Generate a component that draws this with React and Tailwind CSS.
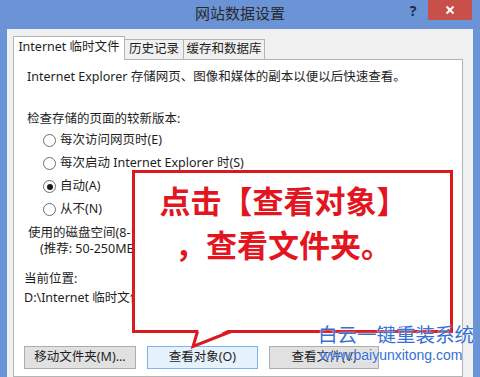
import React from "react";

const Radio = ({ checked, label }) => (
  <div className="h-[23px] flex items-center pl-[29px]">
    <span className="w-[13px] h-[13px] rounded-full border border-[#6e6e6e] bg-white flex items-center justify-center">
      {checked && <span className="w-[6px] h-[6px] rounded-full bg-[#1a1a1a]"></span>}
    </span>
    <span className="ml-[4px]">{label}</span>
  </div>
);

const App = () => {
  const radios = [
    { label: "每次访问网页时(E)", checked: false },
    { label: "每次启动 Internet Explorer 时(S)", checked: false },
    { label: "自动(A)", checked: true },
    { label: "从不(N)", checked: false },
  ];

  return (
    <div className="w-[480px] h-[377px] overflow-hidden bg-[#6b94d6] relative flex flex-col font-['Noto_Sans','Noto_Sans_CJK_SC',sans-serif] text-[12.5px] text-[#1e1e1e]">
      {/* Title bar */}
      <div className="h-[29px] shrink-0 grid grid-cols-[1fr_auto_1fr]">
        <div></div>
        <div className="flex items-center text-[15px] text-[#2a2a2a] pb-[2px]">网站数据设置</div>
        <div className="flex items-start justify-end">
          <div className="w-[16px] h-[20px] mr-[7px] flex items-center justify-center text-[14px] font-bold text-[#1c2b4f]">?</div>
          <div className="w-[44px] h-[20px] mr-[8px] bg-[#c9504a] flex items-center justify-center">
            <svg width="10" height="10" viewBox="0 0 10 10">
              <path d="M1.5 1.5 L8.5 8.5 M8.5 1.5 L1.5 8.5" stroke="white" strokeWidth="2" />
            </svg>
          </div>
        </div>
      </div>

      {/* Dialog body */}
      <div className="mx-[7px] flex-1 bg-[#f0f0f0] pl-[6px] pt-[7px] flex flex-col">
        {/* Tabs */}
        <div className="h-[24px] flex items-end shrink-0">
          <div className="relative z-10 w-[112px] h-[24px] bg-white border-l border-t border-r border-[#b4b4b4] flex items-center justify-center pb-[2px]">
            Internet 临时文件
          </div>
          <div className="w-[60px] h-[21px] -ml-px bg-[#f0f0f0] border border-[#b4b4b4] flex items-center justify-center pb-[1px]">
            历史记录
          </div>
          <div className="w-[82px] h-[21px] -ml-px bg-[#f0f0f0] border border-[#b4b4b4] flex items-center justify-center pb-[1px]">
            缓存和数据库
          </div>
        </div>

        {/* Tab panel */}
        <div className="-mt-px w-[450px] flex-1 bg-white border border-[#b4b4b4] pt-[7px]">
          <div className="h-[20px] flex items-center pl-[13px] whitespace-nowrap">
            Internet Explorer 存储网页、图像和媒体的副本以便以后快速查看。
          </div>
          <div className="h-[20px] mt-[22px] flex items-center pl-[13px]">检查存储的页面的较新版本:</div>
          {radios.map((r) => (
            <Radio key={r.label} label={r.label} checked={r.checked} />
          ))}
          <div className="h-[16px] mt-[4px] flex items-center pl-[14px]">使用的磁盘空间(8-1024MB)(D):</div>
          <div className="h-[16px] flex items-center pl-[26px]">(推荐: 50-250MB)</div>
          <div className="h-[18px] mt-[13px] flex items-center pl-[10px]">当前位置:</div>
          <div className="h-[20px] flex items-center pl-[10px] whitespace-nowrap">
            D:\Internet 临时文件
          </div>
          <div className="mt-[38px] pl-[10px] flex gap-[11px]">
            <button className="w-[112px] h-[23px] bg-[#e1e1e1] border border-[#adadad] flex items-center justify-center">
              移动文件夹(M)...
            </button>
            <button className="w-[111px] h-[23px] bg-[#e5f1fb] border border-[#7eb4ea] flex items-center justify-center">
              查看对象(O)
            </button>
            <button className="w-[110px] h-[23px] bg-[#e1e1e1] border border-[#adadad] flex items-center justify-center">
              查看文件(V)
            </button>
          </div>
        </div>
      </div>

      {/* Callout overlay */}
      <div className="absolute left-[132px] top-[170px] w-[321px] h-[163px] border-[3px] border-[#da1a20] bg-white">
        <div className="pt-[5px] pr-[18px] text-center leading-[44px] text-[31px] font-bold text-[#e3161f] font-['Noto_Sans_CJK_SC',sans-serif]">
          <div>点击【查看对象】</div>
          <div>，查看文件夹。</div>
        </div>
      </div>
      <svg className="absolute left-[185px] top-[328px]" width="55" height="22" viewBox="0 0 55 22">
        <polygon points="14,1 8,18 45,1" fill="white" />
        <polyline points="12.5,3.5 8,18.5 46,3.5" fill="none" stroke="#da1a20" strokeWidth="3" />
      </svg>

      {/* Watermark */}
      <div className="absolute left-[318px] top-[322px] flex flex-col text-[#3570d6] [text-shadow:0_0_2px_white]">
        <div className="h-[24px] leading-[24px] text-[19.5px] font-['Noto_Sans_CJK_SC',sans-serif] whitespace-nowrap">
          白云一键重装系统
        </div>
        <div className="h-[18px] leading-[18px] ml-[2px] text-[14px] font-['Liberation_Sans',sans-serif] whitespace-nowrap">
          www.baiyunxitong.com
        </div>
      </div>
    </div>
  );
};

export default App;
